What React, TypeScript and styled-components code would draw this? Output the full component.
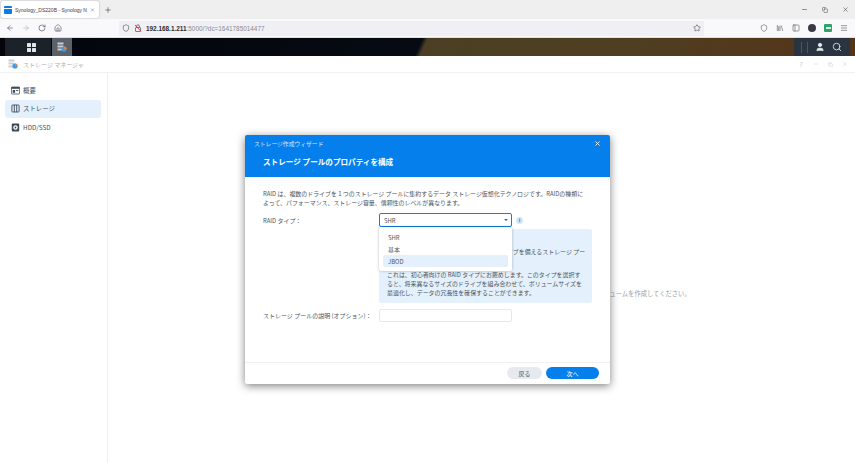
import React from 'react';
import styled, { createGlobalStyle } from 'styled-components';
import {
  ArrowLeft,
  ArrowRight,
  RotateCw,
  Home,
  Shield,
  Star,
  Library,
  PanelLeft,
  Menu,
  Minus,
  X,
  Plus,
  Copy,
  Search,
  User,
} from 'lucide-react';

const GlobalStyle = createGlobalStyle`
  html, body {
    margin: 0;
    padding: 0;
    width: 855px;
    height: 463px;
    overflow: hidden;
    background: #ffffff;
    font-family: 'Noto Sans CJK JP', 'Noto Sans', sans-serif;
  }
  * { box-sizing: border-box; }
`;

const Page = styled.div`
  position: relative;
  width: 855px;
  height: 463px;
  display: flex;
  flex-direction: column;
  overflow: hidden;
`;

const TabStrip = styled.div`
  height: 19px;
  background: #efefef;
  display: flex;
  align-items: center;
  padding-left: 1px;
`;

const Tab = styled.div`
  width: 98px;
  height: 17px;
  background: #ffffff;
  border-radius: 2px;
  box-shadow: 0 0 2px rgba(0, 0, 0, 0.3);
  display: flex;
  align-items: center;
  padding: 0 4px 0 3px;
  gap: 3px;
`;

const Favicon = styled.div`
  width: 8px;
  height: 8px;
  background: linear-gradient(#0a7ce6 0 30%, #ffffff 30% 36%, #0a7ce6 36%);
  border-radius: 1px;
  flex: none;
`;

const TabTitle = styled.span`
  flex: 1;
  font-family: 'Liberation Sans', sans-serif;
  font-size: 5px;
  color: #3c3c44;
  white-space: nowrap;
`;

const NewTab = styled.div`
  margin-left: 5px;
  display: flex;
  color: #55555c;
`;

const WindowControls = styled.div`
  margin-left: auto;
  display: flex;
  align-items: center;
  gap: 14px;
  padding-right: 6px;
  color: #4a4a4f;
`;

const Toolbar = styled.div`
  height: 19px;
  background: #f9f9fb;
  border-bottom: 1px solid #e0e0e4;
  display: flex;
  align-items: center;
  padding-left: 6px;
`;

const NavGroup = styled.div`
  display: flex;
  align-items: center;
  gap: 8px;
  color: #5b5b66;
`;

const AddressBar = styled.div`
  margin-left: 57px;
  width: 585px;
  height: 15px;
  background: #f0f0f4;
  display: flex;
  align-items: center;
  padding: 0 3px 0 3px;
  color: #5b5b66;
`;

const SiteIcons = styled.div`
  display: flex;
  align-items: center;
  gap: 4px;
`;

const Url = styled.span`
  margin-left: 4px;
  flex: 1;
  font-family: 'Liberation Sans', sans-serif;
  font-size: 6.4px;
  font-weight: 700;
  color: #2b2b33;
`;

const UrlRest = styled.span`
  font-weight: 400;
  color: #8a8a92;
`;

const ToolIcons = styled.div`
  margin-left: 56px;
  display: flex;
  align-items: center;
  gap: 8px;
  color: #66666e;
`;

const AccountDot = styled.div`
  width: 8px;
  height: 8px;
  border-radius: 50%;
  background: #3a3a44;
`;

const GreenBadge = styled.div`
  width: 8px;
  height: 8px;
  border-radius: 1px;
  background: #2fa36b;
  display: flex;
  align-items: center;
  justify-content: center;

  &::after {
    content: '';
    width: 5px;
    height: 2px;
    background: #d8f3e4;
  }
`;

const DesktopBar = styled.div`
  height: 18px;
  background: linear-gradient(114deg, #03050b 0, #060a12 49%, #4a3f24 49.6%, #4e3f20 70%, #54341a 100%);
  display: flex;
  align-items: stretch;
  padding-left: 5px;
`;

const StartSegment = styled.div`
  width: 46px;
  background: #1c222a;
  display: flex;
  align-items: center;
  justify-content: flex-end;
  padding-right: 15px;
`;

const GridIcon = styled.svg`
  width: 9px;
  height: 9px;
  fill: #e4e6e8;
`;

const AppSegment = styled.div`
  margin-left: 1px;
  width: 20px;
  background: #5a6168;
  display: flex;
  align-items: center;
  justify-content: center;
`;

const TrayRight = styled.div`
  margin-left: auto;
  margin-right: 5px;
  width: 56px;
  background: #2a3440;
  display: flex;
  align-items: center;
  color: #e8eaec;
  padding-left: 7px;
`;

const TrayDivider = styled.div`
  width: 1px;
  height: 11px;
  background: #4c5662;
  margin-right: 5px;
`;

const TrayIcons = styled.div`
  margin-left: 2px;
  display: flex;
  align-items: center;
  gap: 7px;
`;

const AppWindow = styled.div`
  flex: 1;
  display: flex;
  flex-direction: column;
  background: #ffffff;
`;

const AppTitleBar = styled.div`
  height: 17px;
  border-bottom: 1px solid #eff1f4;
  display: flex;
  align-items: center;
  padding: 0 7px 0 8px;
  gap: 5px;
  color: #b9bdc2;
`;

const AppTitle = styled.span`
  font-size: 6px;
  color: #aab0b6;
`;

const AppControls = styled.div`
  margin-left: auto;
  display: flex;
  align-items: center;
  gap: 9px;
  font-size: 6.5px;
  color: #c6cace;
`;

const HelpMark = styled.span`
  width: 6px;
  text-align: center;
`;

const AppBody = styled.div`
  flex: 1;
  display: flex;
`;

const Sidebar = styled.nav`
  width: 108px;
  border-right: 1px solid #eceef1;
  padding: 8px 6px 0 5px;
  display: flex;
  flex-direction: column;
  gap: 0.5px;
`;

const NavItem = styled.div<{ $active?: boolean }>`
  height: 18px;
  border-radius: 3px;
  background: ${({ $active }) => ($active ? '#e4f0fc' : 'transparent')};
  display: flex;
  align-items: center;
  gap: 3px;
  padding-left: 6px;
  font-size: 6.4px;
  color: #44505c;
`;

const NavIcon = styled.svg`
  width: 9px;
  height: 9px;
  flex: none;
`;

const EmptyContent = styled.main`
  flex: 1;
  display: flex;
  align-items: center;
  justify-content: center;
  padding: 50px 0 0 30px;
  font-size: 6.3px;
  color: #9aa0a6;
  white-space: nowrap;
`;

const Dialog = styled.section`
  position: absolute;
  left: 245px;
  top: 135px;
  width: 365px;
  height: 249px;
  background: #ffffff;
  border-radius: 2px;
  box-shadow: 0 2px 8px rgba(0, 0, 0, 0.5);
  display: flex;
  flex-direction: column;
`;

const DialogHeader = styled.header`
  height: 42px;
  background: #057feb;
  border-radius: 2px 2px 0 0;
  color: #ffffff;
  padding: 4px 9px 0 9px;
`;

const HeaderTop = styled.div`
  display: flex;
  align-items: center;
  justify-content: space-between;
  font-size: 5.8px;
  height: 9px;
  color: #d4e8fb;
`;

const CloseButton = styled.div`
  display: flex;
  color: #ffffff;
`;

const DialogTitle = styled.h1`
  margin: 8px 0 0 9px;
  font-size: 7.6px;
  line-height: 12px;
  font-weight: 700;
`;

const DialogBody = styled.div`
  flex: 1;
  padding: 12px 18px 0;
  font-size: 5.95px;
  color: #4a5560;
`;

const Intro = styled.p`
  margin: 0 0 6px;
  line-height: 9px;
  white-space: nowrap;
`;

const FormGrid = styled.div`
  display: grid;
  grid-template-columns: 116px 133px auto;
  align-items: center;
`;

const FieldLabel = styled.label`
  white-space: nowrap;
`;

const SelectWrap = styled.div`
  position: relative;
`;

const SelectBox = styled.div`
  height: 14px;
  background: #ffffff;
  border: 1px solid #0a80e8;
  border-radius: 2px;
  display: flex;
  align-items: center;
  justify-content: space-between;
  padding: 0 3px 0 4px;
`;

const Caret = styled.div`
  width: 0;
  height: 0;
  border-left: 2px solid transparent;
  border-right: 2px solid transparent;
  border-top: 2.5px solid #0a6fd0;
`;

const DropdownList = styled.ul`
  position: absolute;
  left: 0;
  top: 14px;
  z-index: 2;
  width: 133px;
  height: 44px;
  margin: 0;
  padding: 4px;
  list-style: none;
  background: #ffffff;
  border-radius: 2px;
  box-shadow: 0 0 3px rgba(0, 0, 0, 0.28);
`;

const DropdownOption = styled.li<{ $hover?: boolean }>`
  height: 12px;
  display: flex;
  align-items: center;
  padding-left: 5px;
  border-radius: 2px;
  background: ${({ $hover }) => ($hover ? '#e4f0fc' : 'transparent')};
`;

const InfoDot = styled.div`
  margin-left: 4px;
  width: 7px;
  height: 7px;
  border-radius: 50%;
  background: #d3e6f9;
  color: #1f78cc;
  font-family: 'Liberation Sans', sans-serif;
  font-size: 5.5px;
  font-weight: 700;
  line-height: 7px;
  text-align: center;
`;

const HelpPanel = styled.div`
  grid-column: 2 / 4;
  width: 213px;
  height: 74px;
  margin-top: 2px;
  background: #e4f0fc;
  border-radius: 2px;
  padding: 9px 6px 0 8px;
  line-height: 9px;
  white-space: nowrap;
`;

const HelpParagraph = styled.p`
  margin: 0 0 5px;
`;

const DescriptionLabel = styled(FieldLabel)`
  margin-top: 6px;
  letter-spacing: 0.05px;
`;

const DescriptionInput = styled.div`
  height: 13px;
  margin-top: 6px;
  border: 1px solid #e6e8eb;
  border-radius: 2px;
`;

const DialogFooter = styled.footer`
  height: 22px;
  border-top: 1px solid #eef0f3;
  display: flex;
  justify-content: flex-end;
  align-items: flex-start;
  gap: 4px;
  padding: 4px 11px 0 0;
`;

const FooterButton = styled.button<{ $primary?: boolean }>`
  height: 12px;
  width: ${({ $primary }) => ($primary ? '53px' : '35px')};
  border: none;
  padding: 0;
  border-radius: 6px;
  font-family: inherit;
  font-size: 5.9px;
  background: ${({ $primary }) => ($primary ? '#057feb' : '#e6eaef')};
  color: ${({ $primary }) => ($primary ? '#ffffff' : '#4a5560')};
`;

function StorageIcon() {
  return (
    <svg width="10" height="10" viewBox="0 0 10 10">
      <rect x="0.5" y="0.5" width="6" height="2" fill="#c9ced3" />
      <rect x="0.5" y="3.5" width="6" height="2" fill="#c9ced3" />
      <rect x="0.5" y="6.5" width="6" height="2" fill="#c9ced3" />
      <circle cx="7" cy="7" r="2.6" fill="#3f9be8" />
      <path d="M7 7V4.4A2.6 2.6 0 0 1 9.6 7Z" fill="#e8823a" />
    </svg>
  );
}

function BlockedLock() {
  return (
    <svg width="8" height="8" viewBox="0 0 8 8" fill="none">
      <rect x="1.5" y="3.5" width="5" height="4" rx="0.6" stroke="#5b5b66" strokeWidth="0.8" />
      <path d="M2.6 3.5V2.2a1.4 1.4 0 0 1 2.8 0v1.3" stroke="#5b5b66" strokeWidth="0.8" />
      <path d="M1 1l6 6.4" stroke="#d0304a" strokeWidth="0.9" />
    </svg>
  );
}

function OverviewIcon() {
  return (
    <NavIcon viewBox="0 0 9 9" fill="none">
      <rect x="0.4" y="1" width="8.2" height="7" rx="0.8" stroke="#3e4a56" strokeWidth="0.8" />
      <rect x="0.4" y="1" width="8.2" height="1.8" fill="#3e4a56" />
      <rect x="1.7" y="4" width="2.4" height="2.8" fill="#3e4a56" />
      <rect x="5" y="4" width="2.3" height="0.9" fill="#3e4a56" />
    </NavIcon>
  );
}

function ColumnsIcon() {
  return (
    <NavIcon viewBox="0 0 9 9" fill="none">
      <rect x="0.9" y="1" width="7.2" height="7" rx="0.8" stroke="#3e4a56" strokeWidth="0.9" />
      <path d="M3.3 1v7M5.7 1v7" stroke="#3e4a56" strokeWidth="0.9" />
    </NavIcon>
  );
}

function DiskIcon() {
  return (
    <NavIcon viewBox="0 0 9 9">
      <rect x="0.8" y="0.6" width="7.4" height="7.8" rx="1" fill="#3e4a56" />
      <circle cx="4.5" cy="4.5" r="2.2" fill="#ffffff" />
      <circle cx="4.5" cy="4.5" r="0.9" fill="#3e4a56" />
    </NavIcon>
  );
}

export default function App() {
  return (
    <Page>
      <GlobalStyle />
      <TabStrip>
        <Tab>
          <Favicon />
          <TabTitle>Synology_DS220B - Synology N</TabTitle>
          <X size={6} color="#55555c" />
        </Tab>
        <NewTab>
          <Plus size={8} />
        </NewTab>
        <WindowControls>
          <Minus size={7} />
          <Copy size={6} />
          <X size={7} />
        </WindowControls>
      </TabStrip>

      <Toolbar>
        <NavGroup>
          <ArrowLeft size={8} />
          <ArrowRight size={8} color="#b4b4ba" />
          <RotateCw size={8} />
          <Home size={8} />
        </NavGroup>
        <AddressBar>
          <SiteIcons>
            <Shield size={8} />
            <BlockedLock />
          </SiteIcons>
          <Url>
            192.168.1.211<UrlRest>:5000/?dc=1641785014477</UrlRest>
          </Url>
          <Star size={8} />
        </AddressBar>
        <ToolIcons>
          <Shield size={8} />
          <Library size={8} />
          <PanelLeft size={8} />
          <AccountDot />
          <GreenBadge />
          <Menu size={8} />
        </ToolIcons>
      </Toolbar>

      <DesktopBar>
        <StartSegment>
          <GridIcon viewBox="0 0 9 9">
            <rect x="0" y="0" width="4" height="4" rx="0.6" />
            <rect x="5" y="0" width="4" height="4" rx="0.6" />
            <rect x="0" y="5" width="4" height="4" rx="0.6" />
            <rect x="5" y="5" width="4" height="4" rx="0.6" />
          </GridIcon>
        </StartSegment>
        <AppSegment>
          <StorageIcon />
        </AppSegment>
        <TrayRight>
          <TrayDivider />
          <TrayDivider />
          <TrayIcons>
            <User size={10} fill="#e8eaec" />
            <Search size={10} />
          </TrayIcons>
        </TrayRight>
      </DesktopBar>

      <AppWindow>
        <AppTitleBar>
          <StorageIcon />
          <AppTitle>ストレージ マネージャ</AppTitle>
          <AppControls>
            <HelpMark>?</HelpMark>
            <Minus size={6} />
            <Copy size={5} />
            <X size={6} />
          </AppControls>
        </AppTitleBar>
        <AppBody>
          <Sidebar>
            <NavItem>
              <OverviewIcon />
              概要
            </NavItem>
            <NavItem $active>
              <ColumnsIcon />
              ストレージ
            </NavItem>
            <NavItem>
              <DiskIcon />
              HDD/SSD
            </NavItem>
          </Sidebar>
          <EmptyContent>
            ストレージ プールまたはボリュームがありません。「作成」をクリックして、新しいストレージ プールとボリュームを作成してください。
          </EmptyContent>
        </AppBody>
      </AppWindow>

      <Dialog>
        <DialogHeader>
          <HeaderTop>
            ストレージ作成ウィザード
            <CloseButton>
              <X size={7} strokeWidth={3} />
            </CloseButton>
          </HeaderTop>
          <DialogTitle>ストレージ プールのプロパティを構成</DialogTitle>
        </DialogHeader>
        <DialogBody>
          <Intro>
            RAID は、複数のドライブを 1 つのストレージ プールに集約するデータ ストレージ仮想化テクノロジです。RAIDの種類に
            <br />
            よって、パフォーマンス、ストレージ容量、信頼性のレベルが異なります。
          </Intro>
          <FormGrid>
            <FieldLabel>RAID タイプ：</FieldLabel>
            <SelectWrap>
              <SelectBox>
                SHR
                <Caret />
              </SelectBox>
              <DropdownList>
                <DropdownOption>SHR</DropdownOption>
                <DropdownOption>基本</DropdownOption>
                <DropdownOption $hover>JBOD</DropdownOption>
              </DropdownList>
            </SelectWrap>
            <InfoDot>i</InfoDot>
            <span />
            <HelpPanel>
              <HelpParagraph>
                Synology Hybrid RAID (SHR)
                <br />
                SHR は、データ保護のために 2 台以上のドライブを備えるストレージ プー
                <br />
                ルで使用できる、柔軟な RAID タイプです。
              </HelpParagraph>
              <HelpParagraph>
                これは、初心者向けの RAID タイプにお薦めします。このタイプを選択す
                <br />
                ると、将来異なるサイズのドライブを組み合わせて、ボリュームサイズを
                <br />
                最適化し、データの冗長性を確保することができます。
              </HelpParagraph>
            </HelpPanel>
            <DescriptionLabel>ストレージ プールの説明 (オプション)：</DescriptionLabel>
            <DescriptionInput />
          </FormGrid>
        </DialogBody>
        <DialogFooter>
          <FooterButton>戻る</FooterButton>
          <FooterButton $primary>次へ</FooterButton>
        </DialogFooter>
      </Dialog>
    </Page>
  );
}
